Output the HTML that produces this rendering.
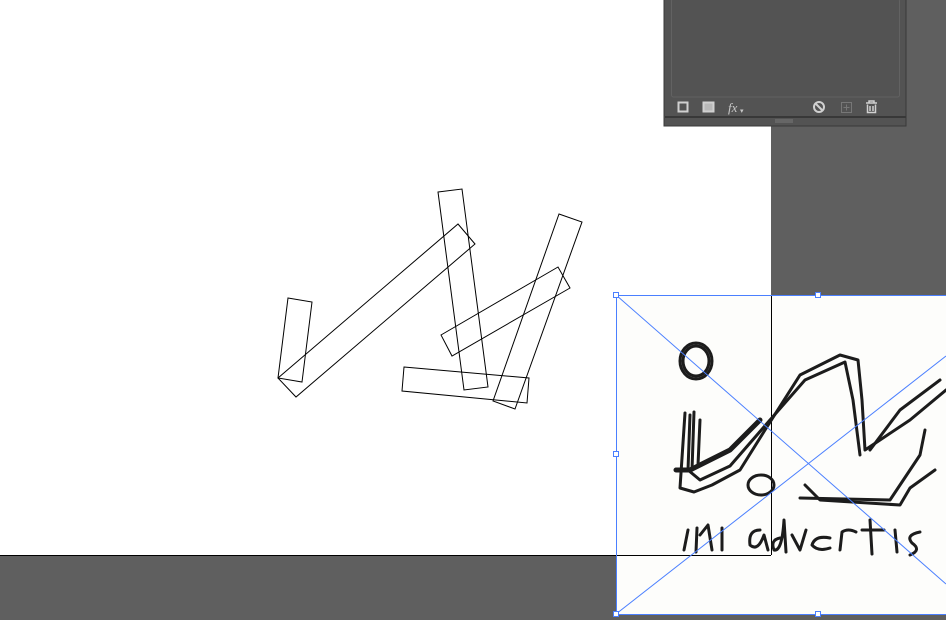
<!DOCTYPE html>
<html><head><meta charset="utf-8"><style>
html,body{margin:0;padding:0;width:946px;height:620px;overflow:hidden;background:#5f5f5f;font-family:"Liberation Sans",sans-serif}
</style></head><body>
<svg width="946" height="620" viewBox="0 0 946 620" style="position:absolute;left:0;top:0">
<rect x="0" y="0" width="946" height="620" fill="#5f5f5f"/>
<rect x="0" y="0" width="771" height="555" fill="#ffffff"/>
<g fill="none" stroke="#000" stroke-width="1">
<polygon points="288,298 312,302 302,382 278,378"/>
<polygon points="278,378 458,224 475,244 296,397"/>
<polygon points="438,192 462,189 488,387 464,390"/>
<polygon points="559,214 582,222 515,409 493,401"/>
<polygon points="441,335 558,267 570,288 452,356"/>
<polygon points="404,367 529,378 527,403 402,391"/>
</g>
<rect x="616" y="295" width="330" height="319" fill="#fdfdfb"/>
<line x1="616" y1="555.5" x2="771" y2="555.5" stroke="#000"/>
<line x1="771.5" y1="295" x2="771.5" y2="555" stroke="#000"/>
<line x1="0" y1="555.5" x2="616" y2="555.5" stroke="#000"/>
<g fill="none" stroke="#1c1c1c" stroke-width="3" stroke-linecap="round" stroke-linejoin="round">
<ellipse cx="696" cy="361" rx="16" ry="18"/>
<ellipse cx="696" cy="361" rx="13" ry="15"/>
<ellipse cx="761" cy="485" rx="13" ry="10"/>
<path d="M685 413 L680 488 L694 492 L712 485 L740 470 L765 430 L800 375 L840 355 L858 360 L862 400 L865 450 L880 440 L910 420 L946 390"/>
<path d="M690 415 L688 470 L700 480 L730 466 L770 420 L805 380 L845 362 L853 400 L860 455"/>
<path d="M694 412 L692 470 M700 420 L698 465"/>
<path d="M676 470 L690 470 L730 450 L760 420" stroke-width="5"/>
<path d="M870 450 L900 410 L940 380"/>
<path d="M805 485 L820 500 L900 505 L910 488 L935 470"/>
<path d="M800 498 L890 500 L920 455 L925 430"/>
<path d="M688 530 L684 550 M697 528 L696 552 M700 535 L708 525 L712 550 M722 528 L722 550"/>
<path d="M760 530 Q748 530 750 545 Q758 552 764 535 L768 550 M780 538 Q770 540 774 550 Q782 552 784 520 L786 552 M792 535 L800 550 L806 530 M830 538 Q815 535 812 545 Q818 552 830 548 M840 550 L842 532 Q848 528 856 532 M870 520 L872 554 M862 530 L884 530 M895 530 L897 552 M920 532 Q905 535 912 543 Q922 550 910 555"/>
</g>
<g stroke="#4a7fff" stroke-width="1" fill="none">
<rect x="616.5" y="295.5" width="340" height="319"/>
<line x1="616" y1="295" x2="946" y2="584"/>
<line x1="616" y1="614" x2="946" y2="356"/>
</g>
<g fill="#fff" stroke="#4a7fff" stroke-width="1">
<rect x="613.5" y="292.5" width="5" height="5"/>
<rect x="815.5" y="292.5" width="5" height="5"/>
<rect x="613.5" y="451.5" width="5" height="5"/>
<rect x="613.5" y="611.5" width="5" height="5"/>
<rect x="815.5" y="611.5" width="5" height="5"/>
</g>
<rect x="664" y="-1" width="242" height="127" fill="#535353" stroke="#3a3a3a" stroke-width="1"/>
<rect x="671.5" y="-1" width="228" height="98" rx="2" fill="none" stroke="#626262"/>
<rect x="665" y="116" width="241" height="2" fill="#383838"/>
<g stroke="#7a7a7a"><line x1="776" y1="119" x2="776" y2="123"/><line x1="778" y1="119" x2="778" y2="123"/><line x1="780" y1="119" x2="780" y2="123"/><line x1="782" y1="119" x2="782" y2="123"/><line x1="784" y1="119" x2="784" y2="123"/><line x1="786" y1="119" x2="786" y2="123"/><line x1="788" y1="119" x2="788" y2="123"/><line x1="790" y1="119" x2="790" y2="123"/><line x1="792" y1="119" x2="792" y2="123"/></g>
<rect x="678.5" y="102.5" width="9" height="9" fill="none" stroke="#d0d0d0" stroke-width="2"/>
<rect x="703.5" y="102.5" width="10" height="9" fill="#b8b8b8" stroke="#d0d0d0" stroke-width="2"/>
<text x="728" y="112" fill="#c8c8c8" font-size="13" font-style="italic" font-family="Liberation Serif,serif">fx</text>
<text x="740" y="113" fill="#c8c8c8" font-size="7">▾</text>
<circle cx="819" cy="107" r="5" fill="none" stroke="#d0d0d0" stroke-width="2"/>
<line x1="815.5" y1="103.5" x2="822.5" y2="110.5" stroke="#d0d0d0" stroke-width="2"/>
<rect x="841.5" y="102.5" width="10" height="10" fill="none" stroke="#777"/>
<path d="M846.5 104.5v6M843.5 107.5h6" stroke="#777"/>
<path d="M866 103h11M869 103v-2h5v2M867.5 104.5v8h8v-8M870 106v5M873 106v5" fill="none" stroke="#d0d0d0" stroke-width="1.5"/>
</svg>
</body></html>
